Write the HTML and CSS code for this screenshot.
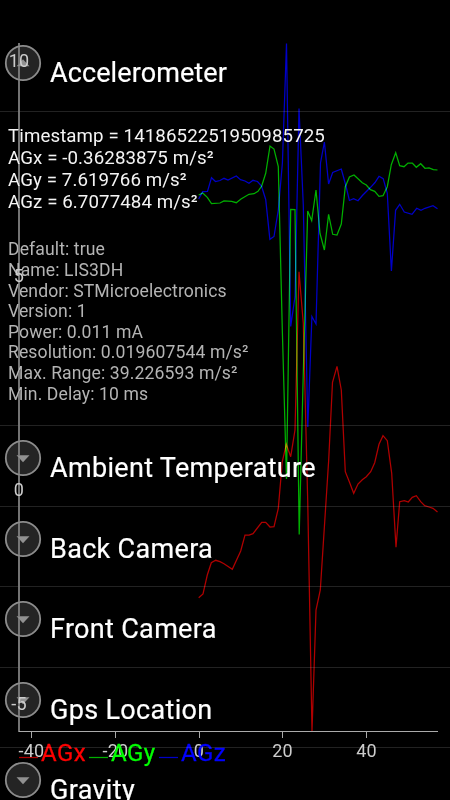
FILE: index.html
```html
<!DOCTYPE html>
<html lang="en">
<head>
    <meta charset="UTF-8">
    <meta name="viewport" content="width=device-width, initial-scale=1.0">
    <title>Sensors</title>
    <link rel="stylesheet" href="styles.css">
</head>
<body>

<div class="screen">

<!-- Sensor list -->
<div class="sensor-list">
    <div class="sensor-row">
        <svg class="toggle" width="38" height="38" viewBox="0 0 38 38"><circle cx="19" cy="19" r="17.2"/><path d="M12.5 22.2L19 15.2L25.5 22.2Z"/></svg>
        <div class="sensor-name">Accelerometer</div>
    </div>
    <div class="sensor-detail">
        <div class="values">
            <div>Timestamp = 1418652251950985725</div>
            <div>AGx = -0.36283875 m/s²</div>
            <div>AGy = 7.619766 m/s²</div>
            <div>AGz = 6.7077484 m/s²</div>
        </div>
        <div class="info">
            <div>Default: true</div>
            <div>Name: LIS3DH</div>
            <div>Vendor: STMicroelectronics</div>
            <div>Version: 1</div>
            <div>Power: 0.011 mA</div>
            <div>Resolution: 0.019607544 m/s²</div>
            <div>Max. Range: 39.226593 m/s²</div>
            <div>Min. Delay: 10 ms</div>
        </div>
    </div>
    <div class="sensor-row">
        <svg class="toggle" width="38" height="38" viewBox="0 0 38 38"><circle cx="19" cy="19" r="17.2"/><path d="M12.5 16.2H25.5L19 23.2Z"/></svg>
        <div class="sensor-name">Ambient Temperature</div>
    </div>
    <div class="sensor-row">
        <svg class="toggle" width="38" height="38" viewBox="0 0 38 38"><circle cx="19" cy="19" r="17.2"/><path d="M12.5 16.2H25.5L19 23.2Z"/></svg>
        <div class="sensor-name">Back Camera</div>
    </div>
    <div class="sensor-row">
        <svg class="toggle" width="38" height="38" viewBox="0 0 38 38"><circle cx="19" cy="19" r="17.2"/><path d="M12.5 16.2H25.5L19 23.2Z"/></svg>
        <div class="sensor-name">Front Camera</div>
    </div>
    <div class="sensor-row">
        <svg class="toggle" width="38" height="38" viewBox="0 0 38 38"><circle cx="19" cy="19" r="17.2"/><path d="M12.5 16.2H25.5L19 23.2Z"/></svg>
        <div class="sensor-name">Gps Location</div>
    </div>
    <div class="sensor-row">
        <svg class="toggle" width="38" height="38" viewBox="0 0 38 38"><circle cx="19" cy="19" r="17.2"/><path d="M12.5 16.2H25.5L19 23.2Z"/></svg>
        <div class="sensor-name">Gravity</div>
    </div>
</div>

<!-- Live chart, laid over the list -->
<svg class="chart" width="450" height="800" viewBox="0 0 450 800">
    <g class="axis">
        <path class="axis-y" d="M19 43V732"/>
        <path d="M19 731.5H438M31.5 732V738M115.5 732V738M199.5 732V738M282.5 732V738M366.5 732V738"/>
    </g>
    <g class="axis-label">
        <text x="19" y="67">10</text>
        <text x="19" y="281.5">5</text>
        <text x="19" y="495.5">0</text>
        <text x="19" y="710">-5</text>
        <text x="31.5" y="756.5">-40</text>
        <text x="115.5" y="756.5">-20</text>
        <text x="199" y="756.5">0</text>
        <text x="282.5" y="756.5">20</text>
        <text x="366.5" y="756.5">40</text>
    </g>
    <polyline class="line line-x" points="198.7,597.7 203,594 207.3,575 211.3,562.7 215.7,560.3 220,561.7 224,563.7 232.3,569.3 240.7,551 245,535 249,535 253,533.7 261.7,522.3 265.7,522.3 270,527 274,526.7 278.3,508.3 282.3,461.7 286.3,444.3 290.7,456.7 295,430 299,271.7 303.3,323.3 307.7,500 312,731 316,610 320.3,590 324.5,525 328.7,460 332.5,382.3 337,366.3 341.3,390 345.3,471.7 349.7,482.7 353.7,493.3 358,484 362.3,479.7 366.3,476.7 370.7,471.7 374.7,462.7 379,444.3 383,435.7 387.3,440.7 391.7,473.3 396,547.3 399.7,501.7 404.3,500.7 408.3,502 412.3,497.3 416.3,495.7 420.7,501.7 424.7,505.7 429,507 433,508.3 437.5,512"/>
    <polyline class="line line-y" points="198.7,195 202.7,193 207.3,197.3 211.5,203.7 220,203 224,201 231.7,201.3 236.3,202.7 241,199 249,194.3 254,193.7 258,191.3 261.7,186 265.7,173.3 270,146 274,149 278.3,166.7 282.4,333 286.5,479 290.7,209.5 295,209.7 299.2,534.5 303.3,373 307.7,211 311.7,220.7 316,190 320,233.5 324.4,250 328.6,214.3 332.7,234.3 337,235 341.3,224 345.3,186.7 349.4,177 354,175 362.3,182.7 366.3,185 370.4,189.7 374.7,191.3 379,196.3 383,195.7 387.3,186.7 391.3,164.7 395.7,152.7 399.7,165.7 404,166.7 408,163 412.3,163 416.3,167.3 420.7,163.7 425,168.3 429,168 433.3,169.7 437.5,170"/>
    <polyline class="line line-z" points="198.7,199 202.7,191.7 207.5,191.5 211.5,177.7 215.5,181.5 220,180.5 224,178.3 228,180 236.3,176 240.5,179.7 245,181 249,183.3 253,180.3 257.5,181.5 261.5,186 265.7,199.5 269.9,239.3 274,236.5 278.3,210 282.4,163 286.5,43.5 290.7,326.5 295,296.7 299,108.5 303.3,205 307.8,427 311.9,316.5 316,324 320.5,163 324.4,142 328.6,184 332.7,172.5 341.3,169 345.7,185 349.4,200.5 353.6,198.7 358,200.7 362.4,195.5 370.6,187.3 375,182.5 379,176.3 383.2,178.7 387.3,193.3 391.4,271 395.6,210.3 399.7,204.3 404.3,212 412,214.3 416.7,208.3 421,210.3 425,208.3 433,205.7 437.5,208.7"/>
    <path class="line line-x" d="M19 757.5H38"/>
    <path class="line line-y" d="M89 757.5H108"/>
    <path class="line line-z" d="M159 757.5H178"/>
    <g class="legend">
        <text class="legend-x" x="41" y="761">AGx</text>
        <text class="legend-y" x="111" y="761">AGy</text>
        <text class="legend-z" x="181" y="761">AGz</text>
    </g>
</svg>

</div>

</body>
</html>
```

FILE: styles.css
```css
body {
    margin: 0;
    background-color: #000;
    font-family: Roboto, sans-serif;
    color: #fff;
}
.screen {
    position: relative;
    width: 450px;
    height: 800px;
    overflow: hidden;
}

/* Chart */
.chart {
    position: absolute;
    top: 0;
    left: 0;
    mix-blend-mode: lighten;
    pointer-events: none;
}
.axis path {
    fill: none;
    stroke: #aaa;
    stroke-width: 1;
}
.axis .axis-y {
    stroke: #808080;
    stroke-width: 1.8;
}
.axis-label {
    font-size: 18px;
    letter-spacing: 0.2px;
    fill: #ccc;
    text-anchor: middle;
}
.line {
    fill: none;
    stroke-width: 1.25;
    mix-blend-mode: screen;
}
.line-x {
    stroke: #b00000;
}
.line-y {
    stroke: #00b000;
}
.line-z {
    stroke: #0000c8;
}
.legend {
    font-size: 24px;
    letter-spacing: 0.4px;
    stroke-width: 0.3;
}
.legend-x {
    fill: #f00;
    stroke: #f00;
}
.legend-y {
    fill: #0f0;
    stroke: #0f0;
}
.legend-z {
    fill: #00f;
    stroke: #00f;
}

/* Sensor list */
.sensor-list {
    padding-top: 31px;
}
.sensor-row {
    display: flex;
    height: 79.6px;
    border-bottom: 1px solid #222;
}
.toggle {
    flex: none;
    margin: 13px 0 0 4px;
}
.toggle circle {
    fill: #242424;
    stroke: #8c8c8c;
    stroke-width: 1.8;
}
.toggle path {
    fill: #919191;
}
.sensor-name {
    margin: 26px 0 0 8px;
    font-size: 27px;
    line-height: 32px;
    letter-spacing: 0.32px;
    white-space: nowrap;
    -webkit-text-stroke: 0.2px #fff;
}
.sensor-row:first-child .sensor-name {
    letter-spacing: 0.1px;
}
.sensor-detail {
    box-sizing: border-box;
    height: 314.5px;
    padding: 13px 8px 0;
    border-bottom: 1px solid #222;
    white-space: nowrap;
}
.values {
    font-size: 18.7px;
    line-height: 22px;
    letter-spacing: 0.1px;
    color: #f4f4f4;
}
.info {
    margin-top: 26.8px;
    font-size: 17.6px;
    line-height: 20.6px;
    letter-spacing: 0.1px;
    color: #b4b4b4;
}
```
